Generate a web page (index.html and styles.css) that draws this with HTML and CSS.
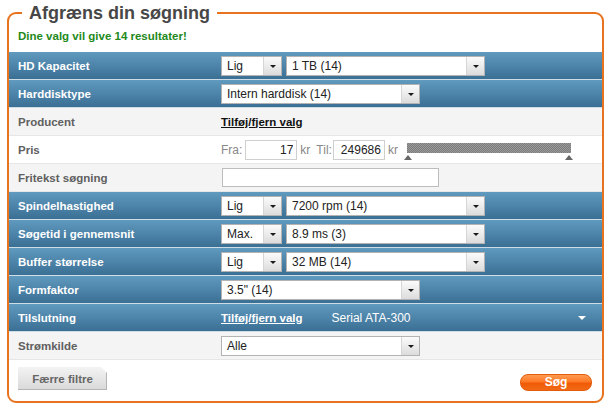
FILE: index.html
```html
<!DOCTYPE html>
<html lang="da">
<head>
<meta charset="UTF-8" />
<meta name="viewport" content="width=device-width, initial-scale=1.0"/>
<title>Afgræns din søgning</title>
<link rel="stylesheet" href="styles.css">
</head>
<body>
<fieldset class="filter-box">
  <legend>Afgræns din søgning</legend>

  <div class="summary">Dine valg vil give 14 resultater!</div>

  <div class="filters">
    <div class="row blue">
      <div class="label">HD Kapacitet</div>
      <div class="value">
        <div class="select small"><span class="text">Lig</span><span class="arrow"></span></div>
        <div class="select wide"><span class="text">1 TB (14)</span><span class="arrow"></span></div>
      </div>
    </div>

    <div class="row blue">
      <div class="label">Harddisktype</div>
      <div class="value">
        <div class="select wide"><span class="text">Intern harddisk (14)</span><span class="arrow"></span></div>
      </div>
    </div>

    <div class="row grey">
      <div class="label">Producent</div>
      <div class="value">
        <a href="#" class="toggle-link">Tilføj/fjern valg</a>
      </div>
    </div>

    <div class="row plain">
      <div class="label">Pris</div>
      <div class="value price">
        <span class="unit from">Fra:</span>
        <input type="text" class="price-input" value="17" />
        <span class="unit kr">kr</span>
        <span class="unit til">Til:</span>
        <input type="text" class="price-input" value="249686" />
        <span class="unit kr">kr</span>
        <div class="slider">
          <div class="slider-bar"></div>
          <span class="handle left"></span>
          <span class="handle right"></span>
        </div>
      </div>
    </div>

    <div class="row grey">
      <div class="label">Fritekst søgning</div>
      <div class="value">
        <input type="text" class="free-text" />
      </div>
    </div>

    <div class="row blue">
      <div class="label">Spindelhastighed</div>
      <div class="value">
        <div class="select small"><span class="text">Lig</span><span class="arrow"></span></div>
        <div class="select wide"><span class="text">7200 rpm (14)</span><span class="arrow"></span></div>
      </div>
    </div>

    <div class="row blue">
      <div class="label">Søgetid i gennemsnit</div>
      <div class="value">
        <div class="select small"><span class="text">Max.</span><span class="arrow"></span></div>
        <div class="select wide"><span class="text">8.9 ms (3)</span><span class="arrow"></span></div>
      </div>
    </div>

    <div class="row blue">
      <div class="label">Buffer størrelse</div>
      <div class="value">
        <div class="select small"><span class="text">Lig</span><span class="arrow"></span></div>
        <div class="select wide"><span class="text">32 MB (14)</span><span class="arrow"></span></div>
      </div>
    </div>

    <div class="row blue">
      <div class="label">Formfaktor</div>
      <div class="value">
        <div class="select wide"><span class="text">3.5" (14)</span><span class="arrow"></span></div>
      </div>
    </div>

    <div class="row blue">
      <div class="label">Tilslutning</div>
      <div class="value">
        <a href="#" class="toggle-link">Tilføj/fjern valg</a>
        <span class="chosen">Serial ATA-300</span>
        <span class="expand"></span>
      </div>
    </div>

    <div class="row grey">
      <div class="label">Strømkilde</div>
      <div class="value">
        <div class="select wide"><span class="text">Alle</span><span class="arrow"></span></div>
      </div>
    </div>
  </div>

  <div class="footer">
    <button class="fewer-btn">Færre filtre</button>
    <button class="search-btn">Søg</button>
  </div>
</fieldset>
</body>
</html>
```

FILE: styles.css
```css
body {
  margin: 0;
  font-family: "Liberation Sans", Arial, sans-serif;
  background: #fff;
  color: #222;
}

.filter-box {
  margin: 2px 8px 0 7px;
  padding: 0;
  min-width: 0;
  border: 2px solid #e8731e;
  border-radius: 9px;
}

.filter-box legend {
  margin-left: 13px;
  padding: 0 7px;
  font-size: 18px;
  line-height: 22px;
  font-weight: bold;
  color: #474747;
}

.summary {
  padding: 5px 9px 9px;
  font-size: 11.5px;
  line-height: 14px;
  font-weight: bold;
  color: #23891b;
}

.row {
  display: flex;
  align-items: center;
  height: 27px;
  border-bottom: 1px solid #e6e6e6;
}

.row.blue {
  background: linear-gradient(#609abf, #3b6f94);
  border-bottom-color: #cddde8;
}

.row.grey {
  background: #f4f4f4;
}

.row.plain {
  background: #fff;
}

.label {
  width: 212px;
  flex-shrink: 0;
  padding-left: 9px;
  box-sizing: border-box;
  font-size: 11.5px;
  font-weight: bold;
  color: #606060;
}

.row.blue .label {
  color: #fff;
}

.value {
  flex: 1;
  display: flex;
  align-items: center;
  gap: 4px;
  font-size: 12px;
}

.select {
  display: flex;
  height: 20px;
  box-sizing: border-box;
  border: 1px solid #b3b3b3;
  background: #fff;
}

.select.small {
  width: 61px;
}

.select.wide {
  width: 199px;
}

.select .text {
  flex: 1;
  padding-left: 5px;
  line-height: 18px;
  font-size: 12px;
  color: #222;
  white-space: nowrap;
  overflow: hidden;
}

.select .arrow {
  width: 17px;
  border-left: 1px solid #d6d6d6;
  background: linear-gradient(#fbfbfb, #dcdcdc);
  display: flex;
  align-items: center;
  justify-content: center;
}

.select .arrow::before {
  content: "";
  border-left: 3px solid transparent;
  border-right: 3px solid transparent;
  border-top: 3px solid #1a1a1a;
  margin-top: 1px;
}

.toggle-link {
  font-size: 11.5px;
  font-weight: bold;
  color: #111;
  text-decoration: underline;
}

.row.blue .toggle-link {
  color: #fff;
}

.chosen {
  margin-left: 25px;
  color: #fff;
  font-size: 12px;
}

.expand {
  margin-left: auto;
  margin-right: 16px;
  border-left: 4px solid transparent;
  border-right: 4px solid transparent;
  border-top: 4px solid #fff;
}

.value.price {
  gap: 0;
}

.unit {
  color: #888;
  font-size: 12px;
}

.from {
  margin-right: 3px;
}

.kr {
  margin: 0 6px 0 3px;
}

.til {
  margin-right: 1px;
}

.price-input {
  height: 20px;
  box-sizing: border-box;
  padding: 0 3px 0 0;
  border: 1px solid #cfcfcf;
  font-family: inherit;
  font-size: 12px;
  color: #222;
  text-align: right;
  width: 52px;
}

.slider {
  position: relative;
  width: 164px;
  height: 17px;
  margin: 4px 0 0 3px;
}

.slider-bar {
  height: 10px;
  background: repeating-conic-gradient(#7c7c7c 0 25%, #9a9a9a 0 50%) 0 0 / 2px 2px;
}

.handle {
  position: absolute;
  top: 12px;
  width: 0;
  height: 0;
  border-left: 4px solid transparent;
  border-right: 4px solid transparent;
  border-bottom: 5px solid #666;
}

.handle.left {
  left: -3px;
}

.handle.right {
  right: -2px;
}

.free-text {
  width: 217px;
  height: 19px;
  box-sizing: border-box;
  border: 1px solid #bdbdbd;
  margin-left: 1px;
}

.footer {
  display: flex;
  justify-content: space-between;
  align-items: flex-end;
  padding: 7px 10px 10px 9px;
}

.fewer-btn {
  width: 89px;
  height: 23px;
  margin-bottom: 1px;
  border: none;
  padding: 0;
  background: linear-gradient(#f3f3f3, #d9d9d9);
  box-shadow: inset -1px -1px 0 #b5b5b5;
  clip-path: polygon(0 0, calc(100% - 6px) 0, 100% 6px, 100% 100%, 0 100%);
  font-family: inherit;
  font-size: 11.5px;
  font-weight: bold;
  color: #666;
  cursor: pointer;
}

.search-btn {
  width: 72px;
  height: 17px;
  padding: 0;
  border: 1px solid #e25c0c;
  border-radius: 8px;
  background: linear-gradient(#ff9a52, #ff7a26 45%, #f05a06 55%, #f26a16);
  font-family: inherit;
  font-size: 12px;
  font-weight: bold;
  color: #fff;
  line-height: 15px;
  cursor: pointer;
}
```
